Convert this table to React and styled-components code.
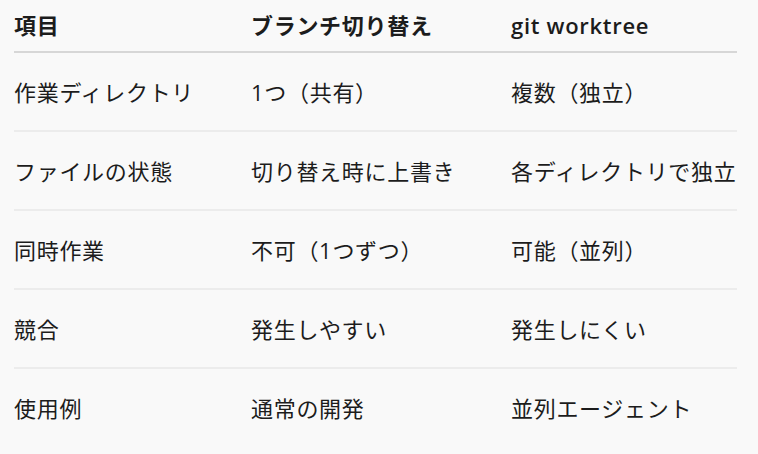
import React from 'react';
import styled, { createGlobalStyle } from 'styled-components';

const GlobalStyle = createGlobalStyle`
  html, body {
    margin: 0;
    padding: 0;
    background: #f9f9f9;
  }
  body {
    font-family: "Open Sans", "Noto Sans CJK JP", sans-serif;
    color: #1c1c1c;
  }
`;

const Page = styled.div`
  padding: 0 21px 0 14px;
`;

const Table = styled.div`
  display: flex;
  flex-direction: column;
`;

const Row = styled.div`
  display: grid;
  grid-template-columns: 237px 260px 1fr;
  align-items: center;
  height: ${({ head }) => (head ? '51px' : '77px')};
  border-bottom: 2px solid ${({ head }) => (head ? '#d7d7d7' : '#ececec')};
  ${({ last }) => last && 'border-bottom: none;'}
`;

const Cell = styled.div`
  font-size: 22px;
  line-height: 26px;
  letter-spacing: 0.7px;
  font-weight: ${({ head }) => (head ? 600 : 400)};
  white-space: nowrap;
  padding-bottom: ${({ head }) => (head ? '2px' : '0')};
`;

const header = ['項目', 'ブランチ切り替え', 'git worktree'];

const rows = [
  ['作業ディレクトリ', '1つ（共有）', '複数（独立）'],
  ['ファイルの状態', '切り替え時に上書き', '各ディレクトリで独立'],
  ['同時作業', '不可（1つずつ）', '可能（並列）'],
  ['競合', '発生しやすい', '発生しにくい'],
  ['使用例', '通常の開発', '並列エージェント'],
];

export default function App() {
  return (
    <>
      <GlobalStyle />
      <Page>
        <Table>
          <Row head>
            {header.map((h) => (
              <Cell head key={h}>{h}</Cell>
            ))}
          </Row>
          {rows.map((r, i) => (
            <Row key={r[0]} last={i === rows.length - 1}>
              {r.map((c) => (
                <Cell key={c}>{c}</Cell>
              ))}
            </Row>
          ))}
        </Table>
      </Page>
    </>
  );
}
